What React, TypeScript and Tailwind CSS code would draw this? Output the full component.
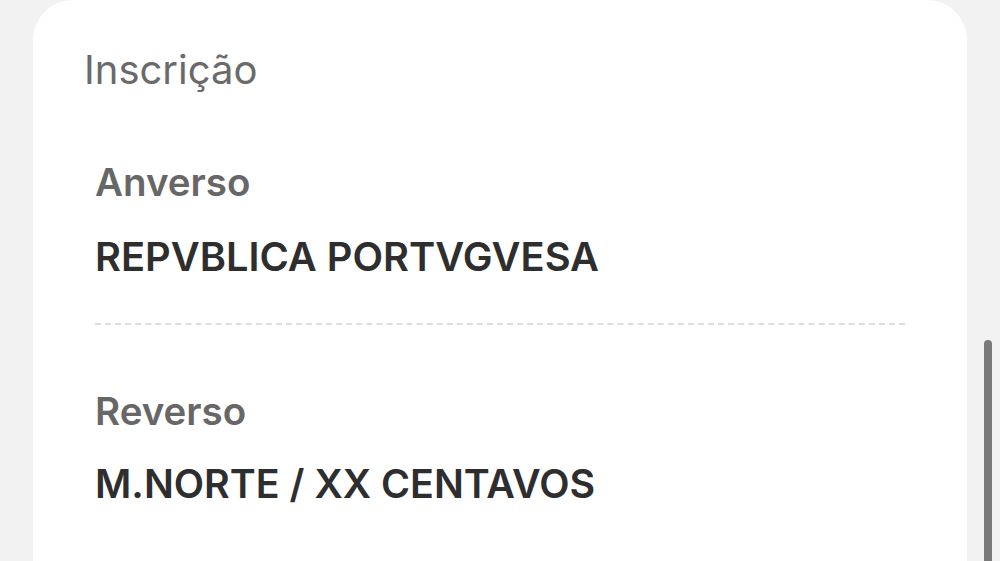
import React from "react";

export default function App() {
  const font = { fontFamily: "Inter, 'Noto Sans', sans-serif" };
  return (
    <div className="relative h-[561px] w-[1000px] overflow-hidden bg-[#f2f2f2]" style={font}>
      <div className="ml-[33px] h-[600px] w-[934px] rounded-t-[40px] bg-white pt-[46px]">
        <div className="pl-[51px] text-[40px] leading-[48px] font-normal text-[#6a6a6a]">Inscrição</div>
        <div className="px-[62px] pt-[64px]">
          <div className="text-[38.5px] leading-[48px] font-semibold text-[#676767]">Anverso</div>
          <div className="pt-[27px] text-[39.8px] leading-[48px] font-semibold text-[#2e2e2e]">REPVBLICA PORTVGVESA</div>
          <div className="mt-[42px] border-t-2 border-dashed border-[#dedede]" />
          <div className="pt-[62px] text-[38.5px] leading-[48px] font-semibold text-[#676767]">Reverso</div>
          <div className="pt-[25px] text-[39.4px] leading-[48px] font-semibold text-[#2e2e2e]">M.NORTE / XX CENTAVOS</div>
        </div>
      </div>
      <div className="absolute left-[984px] top-[340px] h-[240px] w-[8px] rounded-full bg-[#7a7a7a]" />
    </div>
  );
}
